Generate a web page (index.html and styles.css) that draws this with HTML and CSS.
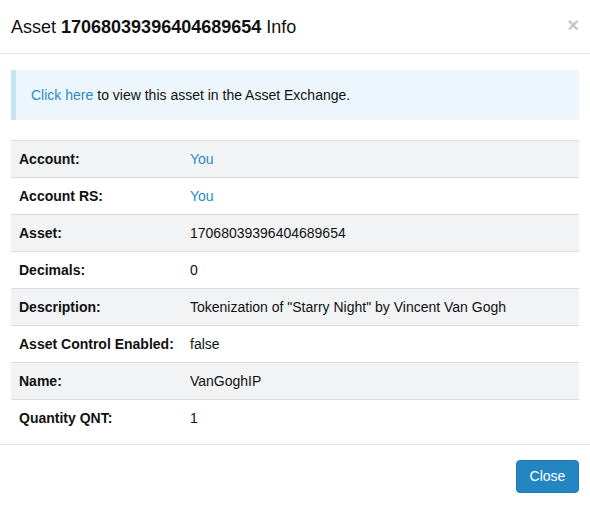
FILE: index.html
```html
<!DOCTYPE html>
<html>
<head>
<meta charset="utf-8">
<link rel="stylesheet" href="styles.css">
</head>
<body>
<div class="modal">
  <div class="modal-header">
    <h4 class="title">Asset <strong>17068039396404689654</strong> Info</h4>
    <span class="close">&times;</span>
  </div>
  <div class="modal-body">
    <div class="alert"><a href="#">Click here</a> to view this asset in the Asset Exchange.</div>
    <table class="info">
      <tr><th>Account:</th><td><a href="#">You</a></td></tr>
      <tr><th>Account RS:</th><td><a href="#">You</a></td></tr>
      <tr><th>Asset:</th><td>17068039396404689654</td></tr>
      <tr><th>Decimals:</th><td>0</td></tr>
      <tr><th>Description:</th><td>Tokenization of "Starry Night" by Vincent Van Gogh</td></tr>
      <tr><th>Asset Control Enabled:</th><td>false</td></tr>
      <tr><th>Name:</th><td>VanGoghIP</td></tr>
      <tr><th>Quantity QNT:</th><td>1</td></tr>
    </table>
  </div>
  <div class="modal-footer">
    <button class="btn">Close</button>
  </div>
</div>
</body>
</html>
```
FILE: styles.css
```css
html, body {
  margin: 0;
  padding: 0;
  background: #fff;
}
body {
  font-family: "Liberation Sans", Arial, sans-serif;
  font-size: 14px;
  color: #111;
}
a {
  color: #2a8bc6;
  text-decoration: none;
}
.modal {
  width: 590px;
}
.modal-header {
  height: 54px;
  border-bottom: 1px solid #e5e5e5;
  display: flex;
  align-items: center;
  justify-content: space-between;
  padding: 0 11px;
  box-sizing: border-box;
}
.title {
  margin: 0;
  font-size: 18px;
  font-weight: normal;
  color: #111;
  padding-top: 1px;
}
.title strong {
  font-weight: bold;
}
.close {
  font-size: 20px;
  font-weight: bold;
  color: #c7c7c7;
  line-height: 1;
  margin-top: -3px;
  margin-right: 0;
}
.modal-body {
  padding: 16px 11px 7px;
}
.alert {
  height: 50px;
  box-sizing: border-box;
  background: #eef6fd;
  border-left: 5px solid #c9e4f1;
  padding: 0 0 0 15px;
  display: flex;
  align-items: center;
  margin-bottom: 20px;
  color: #111;
}
.alert a {
  margin-right: 4px;
}
.info {
  width: 100%;
  border-collapse: collapse;
}
.info tr {
  border-top: 1px solid #dcdcdc;
}
.info tr:nth-child(odd) {
  background: #f2f3f5;
}
.info th, .info td {
  height: 37px;
  padding: 0 8px;
  box-sizing: border-box;
  text-align: left;
  vertical-align: middle;
}
.info th {
  width: 171px;
  font-weight: bold;
}
.modal-footer {
  border-top: 1px solid #e5e5e5;
  display: flex;
  justify-content: flex-end;
  padding: 15px 11px;
}
.btn {
  width: 63px;
  height: 33px;
  background: #2386c2;
  border: 1px solid #1f79b0;
  border-radius: 4px;
  color: #fff;
  font-family: "Liberation Sans", Arial, sans-serif;
  font-size: 14px;
  padding: 0;
}
```
